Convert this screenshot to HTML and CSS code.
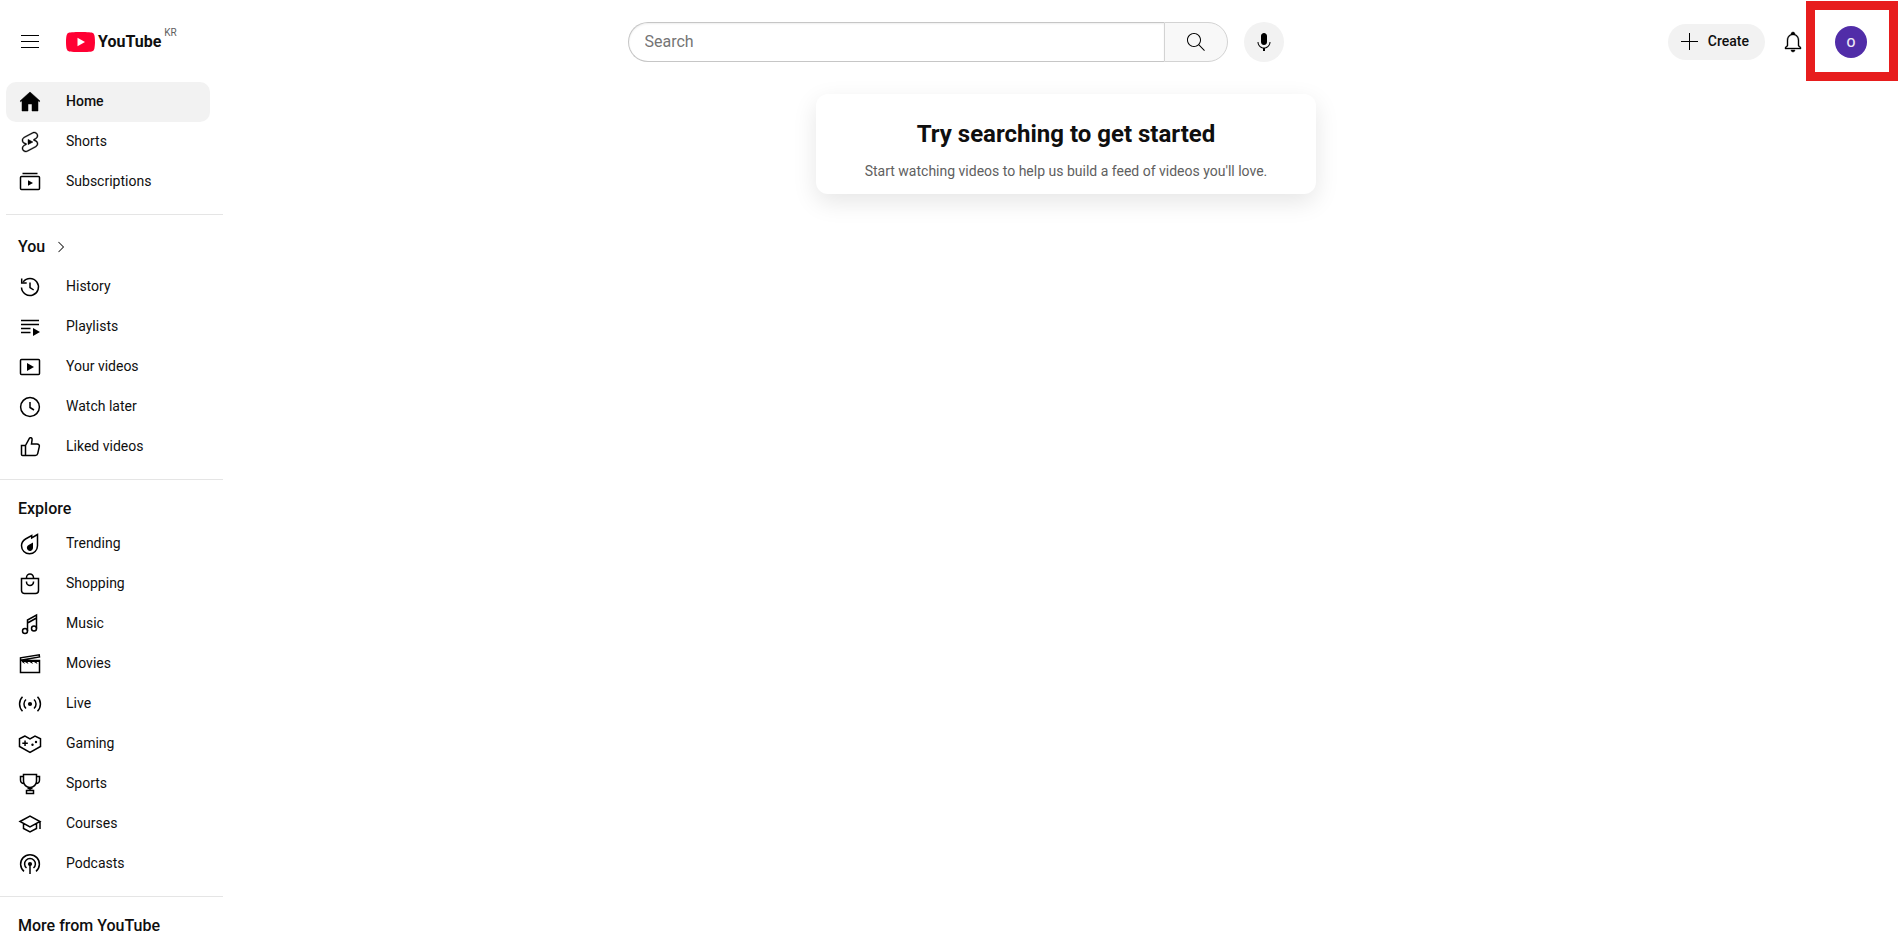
FILE: index.html
```html
<!DOCTYPE html>
<html lang="en">
<head>
    <meta charset="UTF-8">
    <meta name="viewport" content="width=device-width, initial-scale=1.0">
    <title>YouTube</title>
    <link rel="stylesheet" href="styles.css">
</head>
<body>
    <header class="header">
        <div class="header-left">
            <button class="menu-button" type="button" aria-label="Guide">
                <svg class="icon" viewBox="0 0 24 24"><path d="M21 6H3V5h18v1zm0 5H3v1h18v-1zm0 6H3v1h18v-1z"/></svg>
            </button>
            <a class="logo" href="#" aria-label="YouTube Home">
                <svg class="logo-mark" viewBox="0 0 29 20"><path fill="#ff0033" d="M14.5 0S23.500 0 25.700.6a3.600 3.600 0 0 1 2.600 2.500C29 5.400 29 10 29 10s0 4.600-.7 6.900a3.600 3.600 0 0 1-2.600 2.500C23.500 20 14.500 20 14.500 20S5.500 20 3.300 19.400A3.600 3.600 0 0 1 .7 16.900C0 14.600 0 10 0 10s0-4.600.7-6.900A3.600 3.600 0 0 1 3.300.6C5.500 0 14.500 0 14.500 0z"/><path fill="#fff" d="M11.500 14.300 19 10l-7.500-4.300z"/></svg>
                <span class="logo-text">YouTube</span>
                <span class="country">KR</span>
            </a>
        </div>

        <div class="header-center">
            <form class="search">
                <input class="search-input" type="text" placeholder="Search" aria-label="Search">
                <button class="search-button" type="submit" aria-label="Search">
                    <svg class="icon" viewBox="0 0 24 24"><path d="m20.870 20.170-5.590-5.590C16.350 13.350 17 11.750 17 10c0-3.870-3.130-7-7-7s-7 3.130-7 7 3.130 7 7 7c1.750 0 3.350-.65 4.580-1.710l5.590 5.590.7-.71zM10 16c-3.310 0-6-2.690-6-6s2.690-6 6-6 6 2.690 6 6-2.690 6-6 6z"/></svg>
                </button>
            </form>
            <button class="mic-button" type="button" aria-label="Search with your voice">
                <svg class="icon" viewBox="0 0 24 24"><path d="M12 3c-1.660 0-3 1.370-3 3.070v5.860c0 1.700 1.340 3.070 3 3.070s3-1.370 3-3.070V6.070C15 4.370 13.660 3 12 3zm6.500 9h-1c0 3.030-2.470 5.500-5.500 5.500S6.500 15.030 6.500 12h-1c0 3.240 2.390 5.930 5.500 6.410V21h2v-2.590c3.110-.48 5.500-3.170 5.500-6.410z"/></svg>
            </button>
        </div>

        <div class="header-right">
            <button class="create-button" type="button">
                <svg class="icon" viewBox="0 0 24 24"><path d="M20 12h-8v8h-1v-8H3v-1h8V3h1v8h8v1z"/></svg>
                <span class="label">Create</span>
            </button>
            <button class="bell-button" type="button" aria-label="Notifications">
                <svg class="icon icon-bold" viewBox="0 0 24 24"><path d="M10 20h4c0 1.100-.9 2-2 2s-2-.9-2-2zm10-2.650V19H4v-1.650l2-1.880v-5.150C6 7.400 7.560 5.100 10 4.340v-.38c0-1.420 1.490-2.500 2.990-1.760.65.320 1.010 1.030 1.010 1.760v.39c2.440.75 4 3.060 4 5.980v5.150l2 1.870zm-1 .42-2-1.880v-5.470c0-2.470-1.190-4.360-3.130-5.100-1.260-.53-2.640-.5-3.840.03C8.150 6.110 7 7.990 7 10.420v5.470l-2 1.880V18h14v-.23z"/></svg>
            </button>
            <button class="avatar" type="button" aria-label="Account menu">O<span class="highlight"></span></button>
        </div>
    </header>

    <div class="page">
        <nav class="sidebar">
            <div class="section section-main">
                <a class="item active" href="#">
                    <svg class="icon" viewBox="0 0 24 24"><path d="m12 2-10 9 .7.8L4 10.700V21h6v-7h4v7h6V10.700l1.300 1.100.7-.8z" stroke="#000" stroke-width=".5"/></svg>
                    <span class="label">Home</span>
                </a>
                <a class="item" href="#">
                    <svg class="icon icon-bold" viewBox="0 0 24 24"><path d="M10 14.650v-5.300L15 12l-5 2.650zm7.770-4.330-1.200-.5L18 9.060c1.840-.96 2.530-3.230 1.560-5.060s-3.240-2.530-5.070-1.560L6 6.940c-1.290.68-2.070 2.040-2 3.490.07 1.420.93 2.670 2.220 3.250.03.010 1.200.5 1.200.5L6 14.930c-1.830.97-2.530 3.240-1.560 5.070.97 1.830 3.240 2.530 5.070 1.560l8.500-4.500c1.290-.68 2.060-2.040 1.990-3.490-.07-1.420-.94-2.680-2.230-3.250zm-.23 5.860-8.500 4.500c-1.340.71-3.010.2-3.720-1.140-.71-1.340-.2-3.010 1.140-3.720l2.040-1.080v-1.210l-.69-.28-1.110-.46c-.99-.41-1.650-1.350-1.700-2.410-.05-1.060.52-2.060 1.460-2.560l8.500-4.500c1.340-.71 3.010-.2 3.720 1.140.71 1.340.2 3.010-1.140 3.720L15.500 9.260v1.210l1.800.74c.99.410 1.650 1.350 1.700 2.410.05 1.060-.52 2.060-1.460 2.560z"/></svg>
                    <span class="label">Shorts</span>
                </a>
                <a class="item" href="#">
                    <svg class="icon" viewBox="0 0 24 24"><path class="line" d="M4.500 3.500h15M3.500 6.500h17a1 1 0 0 1 1 1v11a1 1 0 0 1-1 1h-17a1 1 0 0 1-1-1v-11a1 1 0 0 1 1-1z"/><path d="M10 15.700v-5.400l5 2.700z"/></svg>
                    <span class="label">Subscriptions</span>
                </a>
            </div>

            <div class="section">
                <a class="item item-title" href="#">
                    <span class="label">You</span>
                    <svg class="chevron" viewBox="0 0 24 24"><path d="m9.400 18.400-.7-.7 5.600-5.600-5.700-5.700.7-.7 6.400 6.400-6.300 6.300z"/></svg>
                </a>
                <a class="item" href="#">
                    <svg class="icon" viewBox="0 0 24 24"><path class="line" d="M3.500 12.500a8.500 8.500 0 1 0 1.700-5.600M3.700 3.500V8h5M12 7.500v5l3.700 2.500"/></svg>
                    <span class="label">History</span>
                </a>
                <a class="item" href="#">
                    <svg class="icon" viewBox="0 0 24 24"><path class="line" d="M3 5.500h18M3 9.500h18M3 13.500h9.500M3 17.500h9.500"/><path d="m15 13 7 4-7 4z"/></svg>
                    <span class="label">Playlists</span>
                </a>
                <a class="item" href="#">
                    <svg class="icon" viewBox="0 0 24 24"><rect class="line" x="2.500" y="4.500" width="19" height="15" rx="1"/><path d="m9 8 7 4-7 4z"/></svg>
                    <span class="label">Your videos</span>
                </a>
                <a class="item" href="#">
                    <svg class="icon" viewBox="0 0 24 24"><circle class="line" cx="12" cy="12" r="9.400"/><path class="line" d="M12 7v5.500l4 2.500"/></svg>
                    <span class="label">Watch later</span>
                </a>
                <a class="item" href="#">
                    <svg class="icon" viewBox="0 0 24 24"><path class="line" d="M3.500 10.500H7.500v10H4.500a1 1 0 0 1-1-1zM7.500 10.500l4-7.300c.5-.9 2.900-.6 2.600 1.500L13.500 9h5.500c1.600 0 2.700 1.200 2.300 2.700l-1.600 6.900c-.3 1.200-1.200 1.900-2.400 1.900H7.500"/></svg>
                    <span class="label">Liked videos</span>
                </a>
            </div>

            <div class="section">
                <h3 class="section-title">Explore</h3>
                <a class="item" href="#">
                    <svg class="icon" viewBox="0 0 24 24"><path class="line" d="M19.500 2.500 13.700 6V3.500L7.500 7C5 8.500 3.500 11 3.500 13.800a8 8 0 0 0 16 0z"/><path d="M15 10.500v5.800a3.100 3.100 0 1 1-4.400-3.300z"/></svg>
                    <span class="label">Trending</span>
                </a>
                <a class="item" href="#">
                    <svg class="icon" viewBox="0 0 24 24"><path class="line" d="M3.500 6.500h17v12a3 3 0 0 1-3 3h-11a3 3 0 0 1-3-3zM8.500 6.500V5.500a3.500 3.500 0 0 1 7 0v1M8.500 9.500v.5a3.500 3.500 0 0 0 7 0v-.5"/></svg>
                    <span class="label">Shopping</span>
                </a>
                <a class="item" href="#">
                    <svg class="icon" viewBox="0 0 24 24"><path class="line" d="M9.500 19V8l9-5v13.500M9.500 11l9-5"/><circle class="line" cx="7" cy="19" r="2.500"/><circle class="line" cx="16" cy="16.500" r="2.500"/></svg>
                    <span class="label">Music</span>
                </a>
                <a class="item" href="#">
                    <svg class="icon" viewBox="0 0 24 24"><path class="line" d="M2.500 8.500h19v12h-19zM2.500 8.500V5.800l18.700-3 .3 2.200-19 3.300"/><path d="M4 8.500h17v1.500h-2.500l1 2-3.500-2h-2l1 2-3.500-2h-2l1 2L7 10H6l1 2-3-2z"/></svg>
                    <span class="label">Movies</span>
                </a>
                <a class="item" href="#">
                    <svg class="icon" viewBox="0 0 24 24"><circle cx="12" cy="12" r="2.100"/><path class="line" d="M4.500 4.800a10.300 10.300 0 0 0 0 14.400M19.500 4.800a10.300 10.300 0 0 1 0 14.400M8 7.500a6 6 0 0 0 0 9M16 7.500a6 6 0 0 1 0 9"/></svg>
                    <span class="label">Live</span>
                </a>
                <a class="item" href="#">
                    <svg class="icon" viewBox="0 0 24 24"><path class="line" d="M7 4 1.500 6.800v7.700L12 20.500l10.500-6V6.800L17 4l-5 3z"/><path d="M6.300 8.500h1.500v2h2V12h-2v2H6.300v-2h-2v-1.500h2z"/><circle cx="14.500" cy="12.700" r="1.200"/><circle cx="18" cy="10" r="1.200"/></svg>
                    <span class="label">Gaming</span>
                </a>
                <a class="item" href="#">
                    <svg class="icon" viewBox="0 0 24 24"><path class="line" d="M5.500 2.500h13V9a6.500 6.500 0 0 1-13 0zM5.500 4.500h-3V8c0 2 1.400 3.400 3.500 3.500M18.500 4.500h3V8c0 2-1.400 3.400-3.500 3.500M12 15.500v3M8.500 18.500h7v3h-7zM9.500 16.500h5"/></svg>
                    <span class="label">Sports</span>
                </a>
                <a class="item" href="#">
                    <svg class="icon" viewBox="0 0 24 24"><path class="line" d="M2 9.500 12 4l10 5.500L12 15zM5.500 11.500v5L12 20l6.500-3.500v-5M22 9.500v7.500"/></svg>
                    <span class="label">Courses</span>
                </a>
                <a class="item" href="#">
                    <svg class="icon" viewBox="0 0 24 24"><circle cx="12" cy="12" r="2.100"/><path class="line" d="M12 12v10M6 19.300a9.400 9.400 0 1 1 12 0M8.500 16a5.400 5.400 0 1 1 7 0"/></svg>
                    <span class="label">Podcasts</span>
                </a>
            </div>

            <div class="section">
                <h3 class="section-title">More from YouTube</h3>
            </div>
        </nav>

        <main class="content">
            <div class="card">
                <h1 class="card-title">Try searching to get started</h1>
                <p class="card-text">Start watching videos to help us build a feed of videos you'll love.</p>
            </div>
        </main>
    </div>
</body>
</html>
```
FILE: styles.css
```css
* {
    box-sizing: border-box;
}
body {
    margin: 0;
    font-family: Roboto, Arial, sans-serif;
    font-size: 14px;
    color: #0f0f0f;
    background-color: #fff;
}
button {
    display: flex;
    align-items: center;
    justify-content: center;
    padding: 0;
    border: none;
    background: none;
    font-family: inherit;
    color: inherit;
    cursor: pointer;
}
a {
    color: inherit;
    text-decoration: none;
}
.icon {
    width: 24px;
    height: 24px;
    flex-shrink: 0;
    fill: #000;
}
.icon-bold {
    stroke: #000;
    stroke-width: 0.4;
}
.line {
    fill: none;
    stroke: #000;
    stroke-width: 1.5;
}
.label {
    padding-bottom: 2px;
}

/* header */
.header {
    display: grid;
    grid-template-columns: 1fr auto 1fr;
    align-items: center;
    padding: 14px 0 0 12px;
    height: 70px;
}
.header-left {
    display: flex;
    align-items: center;
    gap: 18px;
}
.menu-button {
    width: 36px;
    height: 40px;
}
.logo {
    display: flex;
    align-items: center;
    gap: 3px;
}
.logo-mark {
    width: 29px;
    height: 20px;
}
.logo-text {
    font-size: 16px;
    font-weight: 700;
    line-height: 28px;
}
.country {
    align-self: flex-start;
    font-size: 10px;
    line-height: 10px;
    color: #606060;
}
.header-center {
    display: flex;
    gap: 16px;
}
.search {
    display: flex;
    width: 600px;
}
.search-input {
    flex: 1;
    min-width: 0;
    height: 40px;
    padding: 0 16px 2px;
    border: 1px solid #c6c6c6;
    border-right: none;
    border-radius: 40px 0 0 40px;
    box-shadow: inset 0 1px 2px #eee;
    font-family: inherit;
    font-size: 16px;
    outline: none;
}
.search-input::placeholder {
    color: #757575;
}
.search-button {
    width: 64px;
    height: 40px;
    border: 1px solid #d3d3d3;
    border-radius: 0 40px 40px 0;
    background-color: #f8f8f8;
}
.mic-button {
    width: 40px;
    height: 40px;
    border-radius: 50%;
    background-color: #f2f2f2;
}
.header-right {
    display: flex;
    align-items: center;
    justify-content: flex-end;
    gap: 8px;
    padding-right: 32px;
}
.create-button {
    gap: 6px;
    height: 36px;
    padding: 0 16px 0 10px;
    border-radius: 18px;
    background-color: #f2f2f2;
    font-size: 14px;
    font-weight: 500;
}
.bell-button {
    width: 40px;
    height: 40px;
}
.avatar {
    position: relative;
    width: 32px;
    height: 32px;
    margin-left: 14px;
    border-radius: 50%;
    background-color: #512da8;
    color: #ede7f6;
    font-size: 13px;
    font-weight: 500;
}
.highlight {
    position: absolute;
    inset: -25px -31px -23px -29px;
    border: 9px solid #e71d1d;
    pointer-events: none;
}

/* sidebar */
.page {
    display: flex;
}
.sidebar {
    width: 223px;
    flex-shrink: 0;
}
.section {
    padding: 12px 6px;
    border-bottom: 1px solid #e5e5e5;
}
.section:last-child {
    border-bottom: none;
}
.section-main {
    margin-left: 6px;
    padding-left: 0;
}
.item {
    display: flex;
    align-items: center;
    gap: 24px;
    width: 204px;
    height: 40px;
    padding: 0 12px;
    border-radius: 10px;
}
.item.active {
    background-color: #f2f2f2;
    font-weight: 500;
}
.item-title {
    gap: 6px;
    font-size: 16px;
    font-weight: 500;
}
.chevron {
    width: 20px;
    height: 20px;
    fill: #0f0f0f;
}
.section-title {
    margin: 0;
    padding: 2px 0 0 12px;
    font-size: 16px;
    font-weight: 500;
    line-height: 30px;
}

/* content */
.content {
    flex: 1;
    padding: 24px 0 0 10px;
}
.card {
    max-width: 500px;
    margin: 0 auto;
    padding: 24px 24px 12px;
    border-radius: 12px;
    box-shadow: 0 8px 24px rgba(0, 0, 0, 0.1);
    text-align: center;
}
.card-title {
    margin: 0;
    font-size: 24px;
    font-weight: 700;
    line-height: 32px;
}
.card-text {
    margin: 10px 0 0;
    line-height: 22px;
    color: #606060;
}
```
